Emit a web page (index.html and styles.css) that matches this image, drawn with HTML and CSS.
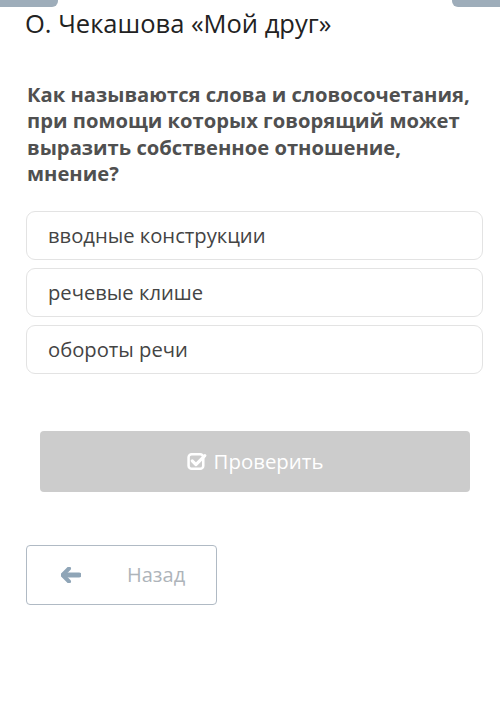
FILE: index.html
```html
<!DOCTYPE html>
<html lang="ru">
<head>
<meta charset="utf-8">
<link rel="stylesheet" href="styles.css">
</head>
<body>
<div class="topbar">
  <div class="tab tab-left"></div>
  <div class="tab tab-right"></div>
</div>
<h1 class="title">О. Чекашова «Мой друг»</h1>
<p class="question">Как называются слова и словосочетания, при помощи которых говорящий может выразить собственное отношение, мнение?</p>
<div class="options">
  <div class="option">вводные конструкции</div>
  <div class="option">речевые клише</div>
  <div class="option">обороты речи</div>
</div>
<div class="check-wrap">
  <div class="check">
    <svg class="check-icon" width="21" height="19" viewBox="0 0 20 18">
      <rect x="1.5" y="2" width="14" height="14" rx="3" fill="none" stroke="#fff" stroke-width="2.4"/>
      <path d="M5 8.5 L8.5 12 L17 3.5" fill="none" stroke="#fff" stroke-width="3" stroke-linecap="round" stroke-linejoin="round"/>
    </svg>
    <span>Проверить</span>
  </div>
</div>
<div class="back">
  <svg class="back-icon" width="20" height="16" viewBox="0 0 20 16">
    <path d="M8 1.5 L1.5 8 L8 14.5" fill="none" stroke="#8fa5b7" stroke-width="4" stroke-linecap="round" stroke-linejoin="round"/>
    <path d="M3 8 H18" stroke="#8fa5b7" stroke-width="5" stroke-linecap="round"/>
  </svg>
  <span>Назад</span>
</div>
</body>
</html>
```
FILE: styles.css
```css
html, body {
  margin: 0;
  padding: 0;
  background: #fff;
}
body {
  width: 500px;
  height: 725px;
  overflow: hidden;
  font-family: "Open Sans", "Noto Sans", sans-serif;
}
.topbar {
  display: flex;
  justify-content: space-between;
  height: 7px;
}
.tab {
  height: 7px;
  background: #9eadba;
}
.tab-left {
  width: 58px;
  border-bottom-right-radius: 6px;
}
.tab-right {
  width: 48px;
  border-bottom-left-radius: 6px;
}
.title {
  margin: 0 0 0 25px;
  font-size: 25.5px;
  font-weight: 400;
  line-height: 32px;
  color: #222;
}
.question {
  margin: 42px 16px 0 27px;
  font-size: 20.2px;
  font-weight: 700;
  line-height: 26.4px;
  color: #505050;
}
.options {
  margin: 24px 17px 0 26px;
  display: flex;
  flex-direction: column;
  gap: 8px;
}
.option {
  height: 47px;
  border: 1px solid #e3e3e3;
  border-radius: 9px;
  padding-left: 21px;
  display: flex;
  align-items: center;
  font-size: 20.2px;
  color: #444;
}
.check-wrap {
  margin: 57px 30px 0 40px;
}
.check {
  height: 61px;
  background: #cccccc;
  border-radius: 4px;
  display: flex;
  align-items: center;
  justify-content: center;
  gap: 6px;
  color: #fff;
  font-size: 20.4px;
}
.check-icon {
  margin-top: 1px;
}
.back {
  margin: 53px 0 0 26px;
  width: 189px;
  height: 58px;
  border: 1.5px solid #b0bac4;
  border-radius: 4px;
  display: flex;
  align-items: center;
  font-size: 20px;
  color: #aeb4ba;
}
.back-icon {
  margin-left: 34px;
  margin-right: 46px;
}
```
